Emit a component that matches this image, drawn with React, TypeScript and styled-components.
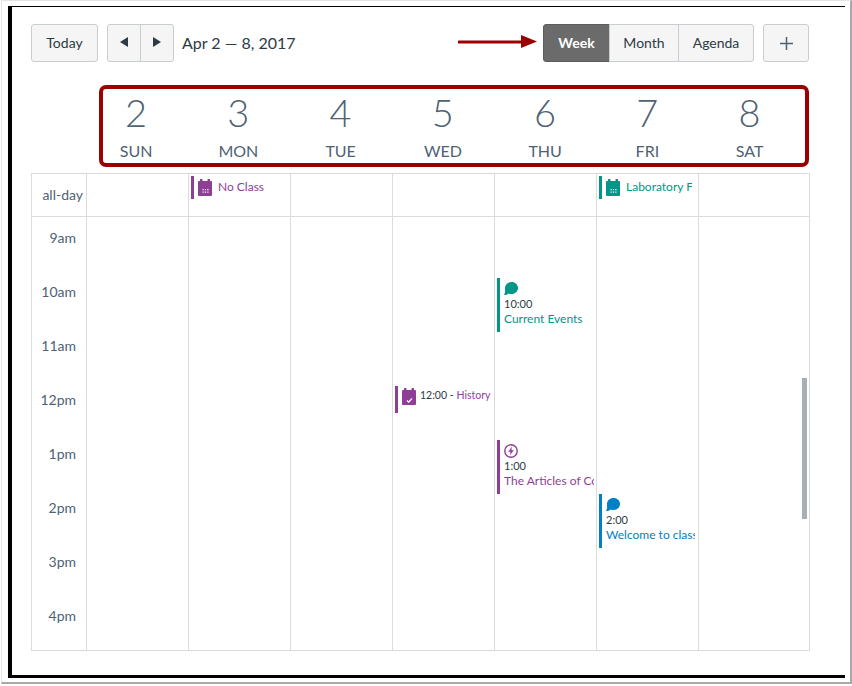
import React from 'react';
import styled, { createGlobalStyle } from 'styled-components';

const purple = '#8f3e97';
const teal = '#009688';
const blue = '#0081c6';
const line = '#d9dcde';
const slate = '#4d6274';
const dark = '#2d3b45';

const GlobalStyle = createGlobalStyle`
  html, body {
    margin: 0;
    padding: 0;
    background: #fff;
    font-family: 'Lato', 'Liberation Sans', sans-serif;
    overflow: hidden;
  }
`;

const Shot = styled.div`
  box-sizing: border-box;
  width: 851px;
  height: 684px;
  margin-left: 1px;
  padding: 5px 4px 4px 6px;
  border: 1px solid #e4e4e4;
  border-right: 2px solid #a9a9a9;
  border-bottom: 2px solid #a9a9a9;
  background: #fff;
`;

const Frame = styled.div`
  box-sizing: border-box;
  width: 837px;
  height: 672px;
  padding: 17px 0 0 19px;
  border-top: 1px solid #000;
  border-left: 4px solid #000;
  border-bottom: 3px solid #000;
`;

const Toolbar = styled.div`
  display: flex;
  align-items: center;
  width: 778px;
  height: 38px;
`;

const Button = styled.button`
  box-sizing: border-box;
  height: 38px;
  padding: 0 0 2px;
  border: 1px solid #c7cdd1;
  border-radius: 3px;
  background: #f5f5f5;
  color: ${dark};
  font: 400 14px 'Lato', sans-serif;
  display: flex;
  align-items: center;
  justify-content: center;
`;

const TodayButton = styled(Button)`
  width: 67px;
  margin-right: 9px;
`;

const PlusButton = styled(Button)`
  width: 46px;
  margin-left: 9px;
  padding: 0;
`;

const Segments = styled.div`
  display: flex;
`;

const Segment = styled(Button)<{ $w: number; $active?: boolean }>`
  width: ${(p) => p.$w}px;
  border-radius: 0;
  margin-left: -1px;
  ${(p) => p.$active && `
    background: #6b6b6b;
    border-color: #5d5d5d;
    color: #fff;
    font-weight: 700;
  `}
  &:first-child {
    margin-left: 0;
    border-radius: 3px 0 0 3px;
  }
  &:last-child {
    border-radius: 0 3px 3px 0;
  }
`;

const DateRange = styled.div`
  margin: 0 0 2px 8px;
  font-size: 16px;
  color: ${dark};
  flex: 1;
`;

const Arrow = styled.svg`
  display: block;
  margin: 0 6px 2px 0;
`;

const DayHeader = styled.div`
  box-sizing: border-box;
  width: 710px;
  height: 82px;
  margin: 23px 0 6px 68px;
  border: 4px solid #990000;
  border-radius: 7px;
`;

const DayHeaderRow = styled.div`
  display: grid;
  grid-template-columns: repeat(7, 102.25px);
  margin-left: -18px;
`;

const DayHead = styled.div`
  display: flex;
  flex-direction: column;
  align-items: center;
  color: ${slate};
`;

const DayNumber = styled.div`
  font-size: 38px;
  font-weight: 300;
  line-height: 46px;
`;

const DayName = styled.div`
  font-size: 16px;
  line-height: 20px;
  margin-top: 6px;
`;

const Calendar = styled.div`
  box-sizing: border-box;
  width: 779px;
  height: 478px;
  border: 1px solid ${line};
`;

const AllDayRow = styled.div`
  display: grid;
  grid-template-columns: 54px repeat(6, 102px) 1fr;
  height: 42px;
  border-bottom: 1px solid ${line};
`;

const AllDayLabel = styled.div`
  font-size: 14px;
  line-height: 41px;
  text-align: right;
  padding-right: 3px;
  color: ${slate};
`;

const AllDayCell = styled.div`
  position: relative;
  border-left: 1px solid ${line};
  overflow: hidden;
`;

const Body = styled.div`
  display: grid;
  grid-template-columns: 54px repeat(6, 102px) 1fr;
  height: 434px;
  position: relative;
  overflow: hidden;
`;

const Axis = styled.div`
  padding-top: 12px;
`;

const HourLabel = styled.div`
  height: 54px;
  line-height: 18px;
  font-size: 14px;
  text-align: right;
  padding-right: 10px;
  color: ${slate};
`;

const DayColumn = styled.div`
  position: relative;
  border-left: 1px solid ${line};
`;

const Event = styled.div<{ $color: string; $top: number; $height: number; $width: number }>`
  position: absolute;
  box-sizing: border-box;
  left: 2px;
  top: ${(p) => p.$top}px;
  width: ${(p) => p.$width}px;
  height: ${(p) => p.$height}px;
  padding: 4px 0 0 4px;
  border-left: 3px solid ${(p) => p.$color};
  color: ${(p) => p.$color};
  overflow: hidden;
  white-space: nowrap;
`;

const InlineEvent = styled(Event)`
  display: flex;
  align-items: flex-start;
  padding-top: 3px;
`;

const TimedInlineEvent = styled(InlineEvent)`
  padding-top: 2px;
`;

const EventIcon = styled.svg`
  display: block;
  flex: none;
`;

const EventTime = styled.div`
  font-size: 11px;
  line-height: 14px;
  margin-top: 1px;
  color: ${dark};
`;

const EventTitle = styled.div`
  font-size: 12px;
  line-height: 16px;
`;

const InlineTitle = styled.span`
  font-size: 12px;
  line-height: 16px;
  margin-left: 6px;
`;

const InlineTime = styled.span`
  font-size: 10.5px;
  line-height: 14px;
  margin-left: 4px;
  color: ${dark};
`;

const InlineLink = styled.span<{ $color: string }>`
  color: ${(p) => p.$color};
  margin-left: 3px;
`;

const ScrollThumb = styled.div`
  position: absolute;
  left: 770px;
  top: 161px;
  width: 5px;
  height: 141px;
  background: #a5afb5;
`;

const CalendarIcon = ({ color, check }: { color: string; check?: boolean }) => (
  <EventIcon width="14" height="17" viewBox="0 0 14 17">
    <path
      fill={color}
      d="M2.5 0h1.5a.5.5 0 0 1 .5.5V2h5V.5a.5.5 0 0 1 .5-.5h1.500a.5.5 0 0 1 .5.5V2H13a1 1 0 0 1 1 1v13a1 1 0 0 1-1 1H1a1 1 0 0 1-1-1V3a1 1 0 0 1 1-1h1V.5a.5.5 0 0 1 .5-.5z"
    />
    {check ? (
      <path d="M5 12.500l1.700 1.600L10 10.500" fill="none" stroke="#fff" strokeWidth="1.300" />
    ) : (
      <path
        fill="#fff"
        d="M4.500 10h1.200v1.200H4.500zM6.900 10h1.200v1.200H6.900zM9.300 10h1.200v1.200H9.300zM4.500 12.600h1.200v1.200H4.500zM6.900 12.600h1.200v1.200H6.900zM9.300 12.600h1.200v1.200H9.300z"
      />
    )}
  </EventIcon>
);

const BubbleIcon = ({ color }: { color: string }) => (
  <EventIcon width="14" height="14" viewBox="0 0 14 14">
    <path
      fill={color}
      d="M7.500 0C11.100 0 14 2.600 14 6c0 3.400-2.900 6-6.500 6-1 0-2-.2-2.800-.6C3.500 12.500 1.800 13 0 13c.7-1 1-2.300 1.100-3.500C1.100 8.400 1 7.200 1 6 1 2.600 3.900 0 7.500 0z"
    />
  </EventIcon>
);

const BoltIcon = ({ color }: { color: string }) => (
  <EventIcon width="14" height="14" viewBox="0 0 14 14">
    <circle cx="7" cy="7" r="6.200" fill="none" stroke={color} strokeWidth="1.400" />
    <path fill={color} d="M7.900 2.800L4.200 7.800h2.300L6 11.200l3.800-5H7.400z" />
  </EventIcon>
);

const days = [
  ['2', 'SUN'],
  ['3', 'MON'],
  ['4', 'TUE'],
  ['5', 'WED'],
  ['6', 'THU'],
  ['7', 'FRI'],
  ['8', 'SAT'],
];

const hours = ['9am', '10am', '11am', '12pm', '1pm', '2pm', '3pm', '4pm'];

export default function App() {
  return (
    <>
      <GlobalStyle />
      <Shot>
        <Frame>
          <Toolbar>
            <TodayButton>Today</TodayButton>
            <Segments>
              <Segment $w={34}>
                <svg width="8" height="10" viewBox="0 0 8 10">
                  <path d="M8 0v10L0 5z" fill={dark} />
                </svg>
              </Segment>
              <Segment $w={34}>
                <svg width="8" height="10" viewBox="0 0 8 10">
                  <path d="M0 0v10l8-5z" fill={dark} />
                </svg>
              </Segment>
            </Segments>
            <DateRange>Apr 2 — 8, 2017</DateRange>
            <Arrow width="79" height="14" viewBox="0 0 79 14">
              <path d="M1 7h62" stroke="#990000" strokeWidth="3" strokeLinecap="round" />
              <path d="M63 0l16 6.500-16 6.500z" fill="#990000" />
            </Arrow>
            <Segments>
              <Segment $w={67} $active>Week</Segment>
              <Segment $w={70}>Month</Segment>
              <Segment $w={76}>Agenda</Segment>
            </Segments>
            <PlusButton>
              <svg width="13" height="13" viewBox="0 0 13 13">
                <path d="M6.500 0v13M0 6.500h13" stroke={slate} strokeWidth="1.500" />
              </svg>
            </PlusButton>
          </Toolbar>

          <DayHeader>
            <DayHeaderRow>
              {days.map(([num, name]) => (
                <DayHead key={name}>
                  <DayNumber>{num}</DayNumber>
                  <DayName>{name}</DayName>
                </DayHead>
              ))}
            </DayHeaderRow>
          </DayHeader>

          <Calendar>
            <AllDayRow>
              <AllDayLabel>all-day</AllDayLabel>
              <AllDayCell />
              <AllDayCell>
                <InlineEvent $color={purple} $top={2} $height={23} $width={98}>
                  <CalendarIcon color={purple} />
                  <InlineTitle>No Class</InlineTitle>
                </InlineEvent>
              </AllDayCell>
              <AllDayCell />
              <AllDayCell />
              <AllDayCell />
              <AllDayCell>
                <InlineEvent $color={teal} $top={2} $height={23} $width={93}>
                  <CalendarIcon color={teal} />
                  <InlineTitle>Laboratory Fair</InlineTitle>
                </InlineEvent>
              </AllDayCell>
              <AllDayCell />
            </AllDayRow>
            <Body>
              <Axis>
                {hours.map((h) => (
                  <HourLabel key={h}>{h}</HourLabel>
                ))}
              </Axis>
              <DayColumn />
              <DayColumn />
              <DayColumn />
              <DayColumn>
                <TimedInlineEvent $color={purple} $top={169} $height={27} $width={96}>
                  <CalendarIcon color={purple} check />
                  <InlineTime>
                    12:00 -<InlineLink $color={purple}>History</InlineLink>
                  </InlineTime>
                </TimedInlineEvent>
              </DayColumn>
              <DayColumn>
                <Event $color={teal} $top={61} $height={54} $width={97}>
                  <BubbleIcon color={teal} />
                  <EventTime>10:00</EventTime>
                  <EventTitle>Current Events</EventTitle>
                </Event>
                <Event $color={purple} $top={223} $height={54} $width={97}>
                  <BoltIcon color={purple} />
                  <EventTime>1:00</EventTime>
                  <EventTitle>The Articles of Confederation</EventTitle>
                </Event>
              </DayColumn>
              <DayColumn>
                <Event $color={blue} $top={277} $height={54} $width={96}>
                  <BubbleIcon color={blue} />
                  <EventTime>2:00</EventTime>
                  <EventTitle>Welcome to class</EventTitle>
                </Event>
              </DayColumn>
              <DayColumn />
              <ScrollThumb />
            </Body>
          </Calendar>
        </Frame>
      </Shot>
    </>
  );
}
